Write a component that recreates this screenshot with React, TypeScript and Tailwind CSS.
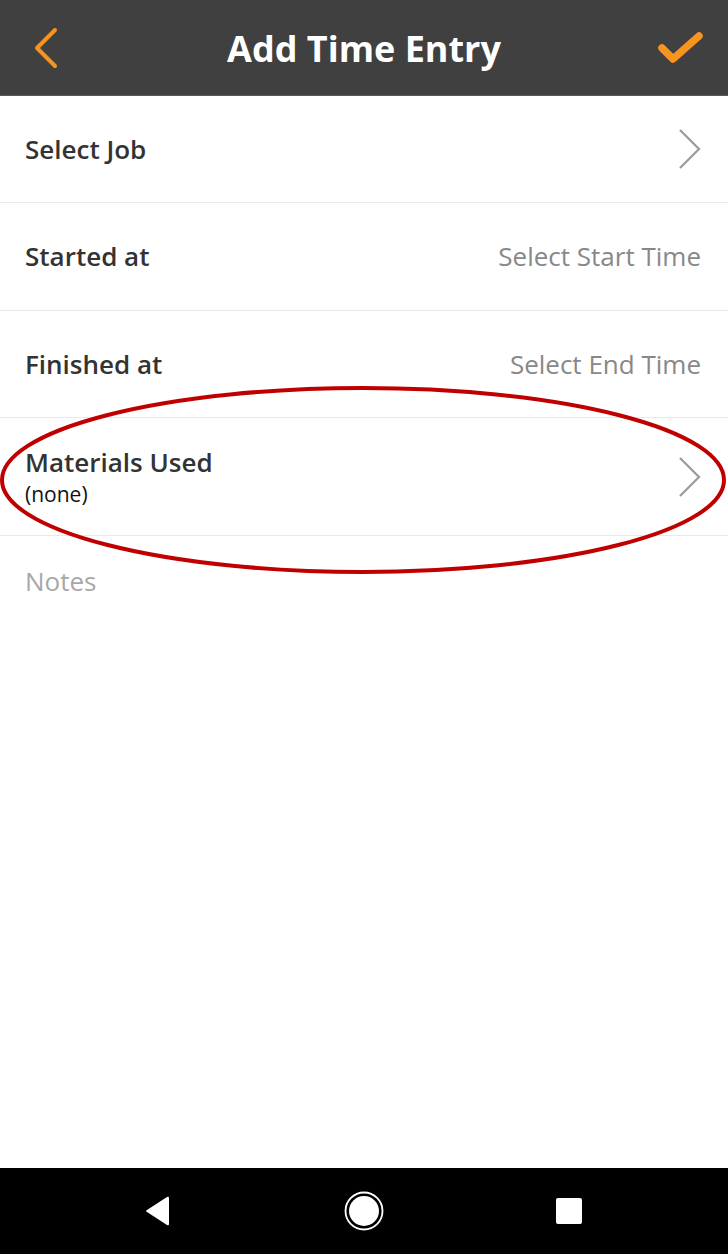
import React from "react";

const Chevron = () => (
  <svg width="24" height="44" viewBox="0 0 24 44" className="shrink-0">
    <path d="M2 3 L21 22 L2 41" fill="none" stroke="#9a9a9a" strokeWidth="2.2" />
  </svg>
);

export default function App() {
  return (
    <div
      className="relative w-[728px] h-[1254px] bg-white flex flex-col overflow-hidden"
      style={{ fontFamily: '"Open Sans", "Noto Sans", sans-serif' }}
    >
      {/* Header */}
      <div className="h-[96px] bg-[#404040] grid grid-cols-[1fr_auto_1fr] items-center px-[34px] border-b border-[#5a5a5a] shrink-0">
        <div className="flex justify-start">
          <svg width="26" height="42" viewBox="0 0 26 42">
            <path d="M21 3 L3 21 L21 39" fill="none" stroke="#f7941d" strokeWidth="4" strokeLinecap="round" strokeLinejoin="round" />
          </svg>
        </div>
        <div className="text-white font-bold text-[36px] leading-none mt-[2px]">Add Time Entry</div>
        <div className="flex justify-end">
          <svg width="46" height="34" viewBox="0 0 46 34" className="mr-[-10px]">
            <path d="M4 17 L15 28 L41 5" fill="none" stroke="#f7941d" strokeWidth="7.5" strokeLinecap="round" strokeLinejoin="round" />
          </svg>
        </div>
      </div>

      {/* Rows */}
      <div className="h-[107px] flex items-center justify-between pl-[25px] pr-[26px] border-b border-[#e9e9e9]">
        <span className="text-[26px] font-semibold text-[#333]">Select Job</span>
        <Chevron />
      </div>
      <div className="h-[108px] flex items-center justify-between pl-[25px] pr-[27px] border-b border-[#e9e9e9]">
        <span className="text-[26px] font-semibold text-[#333]">Started at</span>
        <span className="text-[26px] text-[#888]">Select Start Time</span>
      </div>
      <div className="h-[107px] flex items-center justify-between pl-[25px] pr-[27px] border-b border-[#e9e9e9]">
        <span className="text-[26px] font-semibold text-[#333]">Finished at</span>
        <span className="text-[26px] text-[#888]">Select End Time</span>
      </div>
      <div className="h-[118px] flex items-center justify-between pl-[25px] pr-[26px] border-b border-[#e9e9e9]">
        <div className="flex flex-col">
          <span className="text-[26px] font-semibold text-[#333] leading-[34px]">Materials Used</span>
          <span className="text-[21px] text-[#111] leading-[30px]">(none)</span>
        </div>
        <Chevron />
      </div>
      <div className="pl-[25px] pt-[26px]">
        <span className="text-[26px] text-[#a8a8a8]">Notes</span>
      </div>

      {/* Red ellipse annotation */}
      <svg className="absolute left-0 top-[384px] pointer-events-none" width="728" height="194" viewBox="0 0 728 194">
        <ellipse cx="363" cy="96" rx="361" ry="92" fill="none" stroke="#c00000" strokeWidth="4" />
      </svg>

      <div className="flex-1" />

      {/* Nav bar */}
      <div className="h-[86px] bg-black flex items-center justify-between pl-[144px] pr-[146px] shrink-0">
        <svg width="28" height="30" viewBox="0 0 28 30">
          <path d="M25 2 L25 28 Q25 30 23 29 L3 16 Q1 15 3 14 L23 1 Q25 0 25 2 Z" fill="#fff" />
        </svg>
        <svg width="40" height="40" viewBox="0 0 40 40">
          <circle cx="20" cy="20" r="18.5" fill="none" stroke="#fff" strokeWidth="1.8" />
          <circle cx="20" cy="20" r="15" fill="#fff" />
        </svg>
        <div className="w-[26px] h-[26px] bg-white rounded-[2px]" />
      </div>
    </div>
  );
}
